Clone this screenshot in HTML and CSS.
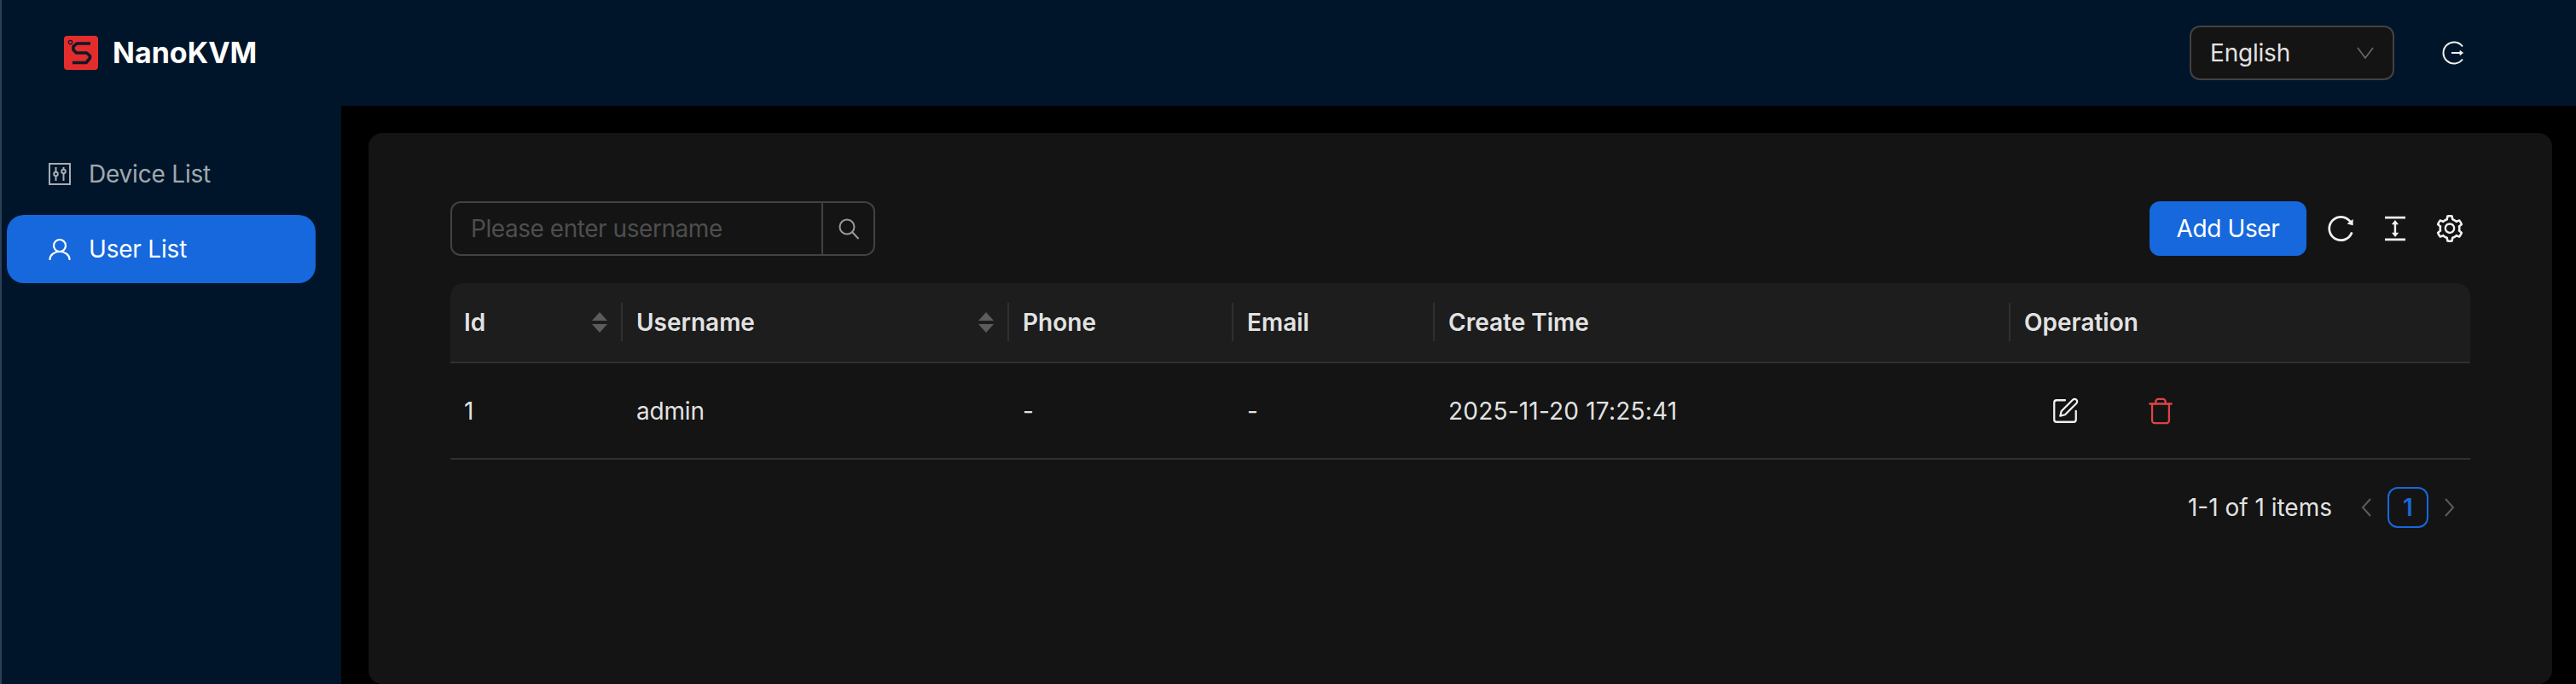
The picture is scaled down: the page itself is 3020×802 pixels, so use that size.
FILE: index.html
```html
<!DOCTYPE html>
<html lang="en">
<head>
<meta charset="utf-8">
<title>NanoKVM</title>
<link rel="stylesheet" href="styles.css">
</head>
<body>
<div class="app">
  <header class="topbar">
    <div class="brand">
      <svg class="logo" viewBox="0 0 40 40"><rect width="40" height="40" rx="4" fill="#e32d2d"/><circle cx="7.500" cy="7.500" r="2.200" fill="none" stroke="#101828" stroke-width="1.300"/><path d="M31 9H15l-4 3.500v4l3.500 3.500h12l4 3.500v2.500L26 31.500H10" fill="none" stroke="#101828" stroke-width="3.600" stroke-linejoin="round"/></svg>
      <span class="brand-name">NanoKVM</span>
    </div>
    <div class="top-actions">
      <div class="lang-select">
        <span class="tight">English</span>
        <svg class="chevron" viewBox="0 0 20 14"><path d="M1 1l9 12 9-12" fill="none" stroke="#6a6a6a" stroke-width="1.600"/></svg>
      </div>
      <svg class="logout" viewBox="0 0 28 28" fill="none" stroke="#f0f0f0" stroke-width="2"><path d="M26 6.500A12.500 12.500 0 1 0 26 21.500"/><path d="M13 14h13"/><path d="M23 11.500l3.500 2.500-3.500 2.500z" fill="#f0f0f0" stroke-width="1"/></svg>
    </div>
  </header>
  <div class="main">
    <nav class="sider">
      <div class="nav-item">
        <svg class="nav-icon" viewBox="0 0 26 26" fill="none" stroke="currentColor" stroke-width="2"><rect x="1" y="1" width="24" height="24"/><path d="M8.500 5v5M8.500 16v5M17.500 5v2M17.500 13v8"/><circle cx="8.500" cy="13" r="2.300"/><circle cx="17.500" cy="10" r="2.300"/></svg>
        <span class="tight">Device List</span>
      </div>
      <div class="nav-item nav-item-active">
        <svg class="nav-icon" viewBox="0 0 26 26" fill="none" stroke="currentColor" stroke-width="2.200" stroke-linecap="round"><circle cx="13" cy="9" r="7"/><path d="M1.500 25a11.500 9 0 0 1 23 0"/></svg>
        <span class="tight">User List</span>
      </div>
    </nav>
    <main class="content">
      <section class="card">
        <div class="toolbar">
          <div class="search">
            <span class="search-input">Please enter username</span>
            <span class="search-btn">
              <svg class="search-icon" viewBox="0 0 26 26" fill="none" stroke="#9a9a9a" stroke-width="2"><circle cx="11" cy="11" r="8.500"/><path d="M17 17l7.500 8"/></svg>
            </span>
          </div>
          <div class="tools">
            <button class="primary-btn">Add User</button>
            <svg class="tool-icon" viewBox="64 64 896 896" fill="#f0f0f0"><path d="M909.100 209.300l-56.400 44.100C775.800 155.100 656.200 92 521.900 92 290 92 102.300 279.500 102 511.500 101.700 743.700 289.800 932 521.900 932c181.300 0 335.800-115 394.600-276.100 1.500-4.200-.7-8.900-4.900-10.300l-56.700-19.500a8 8 0 0 0-10.100 4.800c-1.800 5-3.800 10-5.900 14.900-17.300 41-42.100 77.800-73.700 109.400A344.770 344.770 0 0 1 655.900 829c-42.300 17.900-87.400 27-133.800 27-46.500 0-91.500-9.100-133.800-27A341.500 341.500 0 0 1 279 755.200a342.160 342.160 0 0 1-73.700-109.400c-17.900-42.400-27-87.400-27-133.900s9.100-91.500 27-133.900c17.300-41 42.100-77.800 73.700-109.400 31.600-31.600 68.400-56.400 109.300-73.800 42.300-17.900 87.400-27 133.800-27 46.500 0 91.500 9.100 133.800 27a341.500 341.500 0 0 1 109.300 73.800c9.900 9.900 19.200 20.400 27.800 31.400l-60.200 47a8 8 0 0 0 3 14.100l175.600 43c5 1.200 9.900-2.600 9.900-7.700l.8-180.900c-.1-6.600-7.800-10.300-13-6.200z"/></svg>
            <svg class="tool-icon" viewBox="64 64 896 896" fill="#f0f0f0"><path d="M840 836H184c-4.400 0-8 3.600-8 8v60c0 4.400 3.600 8 8 8h656c4.400 0 8-3.600 8-8v-60c0-4.400-3.600-8-8-8zm0-724H184c-4.400 0-8 3.600-8 8v60c0 4.400 3.600 8 8 8h656c4.400 0 8-3.600 8-8v-60c0-4.400-3.600-8-8-8zM610.800 378c6 0 9.400-7 5.700-11.700L515.700 238.700a7.140 7.140 0 0 0-11.300 0L403.600 366.300a7.230 7.230 0 0 0 5.700 11.700H476v268h-62.800c-6 0-9.400 7-5.700 11.700l100.800 127.500c2.900 3.700 8.500 3.700 11.300 0l100.800-127.500c3.700-4.700.4-11.700-5.700-11.700H544V378h66.800z"/></svg>
            <svg class="tool-icon" viewBox="64 64 896 896" fill="#f0f0f0"><path d="M924.800 625.700l-65.500-56c3.100-19 4.700-38.400 4.700-57.800s-1.600-38.800-4.700-57.800l65.500-56a32.030 32.030 0 0 0 9.300-35.200l-.9-2.600a443.740 443.740 0 0 0-79.700-137.900l-1.800-2.100a32.120 32.120 0 0 0-35.100-9.500l-81.300 28.900c-30-24.600-63.500-44-99.700-57.600l-15.700-85a32.050 32.050 0 0 0-25.800-25.700l-2.700-.5c-52.100-9.400-106.900-9.400-159 0l-2.700.5a32.050 32.050 0 0 0-25.800 25.700l-15.800 85.400a351.860 351.860 0 0 0-99 57.400l-81.900-29.100a32 32 0 0 0-35.100 9.500l-1.800 2.100a446.020 446.020 0 0 0-79.700 137.900l-.9 2.600c-4.500 12.500-.8 26.500 9.300 35.200l66.300 56.600c-3.100 18.800-4.600 38-4.600 57.100 0 19.200 1.500 38.400 4.600 57.100L99 625.500a32.030 32.030 0 0 0-9.300 35.200l.9 2.600c18.100 50.400 44.900 96.900 79.700 137.900l1.800 2.100a32.120 32.120 0 0 0 35.100 9.500l81.900-29.100c29.800 24.500 63.100 43.900 99 57.400l15.800 85.400a32.050 32.050 0 0 0 25.800 25.700l2.700.5a449.400 449.400 0 0 0 159 0l2.700-.5a32.050 32.050 0 0 0 25.800-25.700l15.700-85a350 350 0 0 0 99.700-57.600l81.300 28.900a32 32 0 0 0 35.100-9.500l1.800-2.100c34.800-41.100 61.600-87.500 79.700-137.900l.9-2.600c4.500-12.300.8-26.300-9.300-35zM788.300 465.900c2.500 15.100 3.800 30.600 3.800 46.100s-1.300 31-3.800 46.100l-6.600 40.100 74.700 63.900a370.030 370.030 0 0 1-42.600 73.600L721 702.800l-31.400 25.800c-23.900 19.600-50.500 35-79.300 45.800l-38.100 14.300-17.900 97a377.500 377.500 0 0 1-85 0l-17.900-97.200-37.800-14.500c-28.500-10.800-55-26.200-78.700-45.700l-31.400-25.900-93.400 33.200c-17-22.900-31.200-47.600-42.600-73.600l75.500-64.500-6.500-40c-2.400-14.900-3.700-30.300-3.700-45.500 0-15.300 1.200-30.600 3.700-45.500l6.500-40-75.500-64.500c11.300-26.100 25.600-50.700 42.600-73.600l93.400 33.200 31.400-25.900c23.700-19.500 50.200-34.900 78.700-45.700l37.900-14.300 17.900-97.200c28.100-3.200 56.800-3.200 85 0l17.900 97 38.100 14.300c28.700 10.800 55.400 26.200 79.300 45.800l31.400 25.800 92.800-32.900c17 22.900 31.200 47.600 42.600 73.600L781.800 426l6.500 39.900zM512 326c-97.200 0-176 78.800-176 176s78.800 176 176 176 176-78.800 176-176-78.800-176-176-176zm79.200 255.200A111.600 111.600 0 0 1 512 614c-29.900 0-58-11.700-79.200-32.800A111.600 111.600 0 0 1 400 502c0-29.900 11.700-58 32.800-79.200C454 401.600 482.100 390 512 390c29.900 0 58 11.600 79.200 32.800A111.600 111.600 0 0 1 624 502c0 29.900-11.700 58-32.800 79.200z"/></svg>
          </div>
        </div>
        <table class="table">
          <colgroup>
            <col class="col-id"><col class="col-name"><col class="col-phone"><col class="col-email"><col class="col-time"><col class="col-op">
          </colgroup>
          <thead>
            <tr>
              <th class="th-first"><div class="th-inner"><span>Id</span><span class="sorter"><i class="caret-up"></i><i class="caret-down"></i></span></div></th>
              <th><div class="th-inner"><span>Username</span><span class="sorter"><i class="caret-up"></i><i class="caret-down"></i></span></div></th>
              <th>Phone</th>
              <th>Email</th>
              <th>Create Time</th>
              <th class="th-last">Operation</th>
            </tr>
          </thead>
          <tbody>
            <tr>
              <td>1</td>
              <td class="tight">admin</td>
              <td>-</td>
              <td>-</td>
              <td class="wide">2025-11-20 17:25:41</td>
              <td>
                <div class="ops">
                  <span class="op-btn"><svg class="op-icon" viewBox="0 0 24 24" fill="none" stroke="#f0f0f0" stroke-width="1.600" stroke-linecap="round" stroke-linejoin="round"><path d="M12 3H5a2 2 0 0 0-2 2v14a2 2 0 0 0 2 2h14a2 2 0 0 0 2-2v-7"/><path d="M18.375 2.625a2.121 2.121 0 1 1 3 3L12 15l-4 1 1-4Z"/></svg></span>
                  <span class="op-btn"><svg class="op-icon" viewBox="0 0 24 24" fill="none" stroke="#dc4446" stroke-width="1.600" stroke-linecap="round" stroke-linejoin="round"><path d="M3 6h18"/><path d="M19 6v14c0 1-1 2-2 2H7c-1 0-2-1-2-2V6"/><path d="M8 6V4c0-1 1-2 2-2h4c1 0 2 1 2 2v2"/></svg></span>
                </div>
              </td>
            </tr>
          </tbody>
        </table>
        <div class="pagination">
          <span class="total">1-1 of 1 items</span>
          <svg class="page-arrow" viewBox="0 0 14 24"><path d="M12 2L3 12l9 10" fill="none" stroke="#5c5c5c" stroke-width="2"/></svg>
          <span class="page-current">1</span>
          <svg class="page-arrow" viewBox="0 0 14 24"><path d="M2 2l9 10-9 10" fill="none" stroke="#5c5c5c" stroke-width="2"/></svg>
        </div>
      </section>
    </main>
  </div>
</div>
</body>
</html>
```

FILE: styles.css
```css
* { box-sizing: border-box; }
html, body { margin: 0; height: 100%; overflow: hidden; background: #000; }
body { font-family: Inter, "Liberation Sans", sans-serif; font-size: 28px; color: rgba(255,255,255,.9); }
.app { height: 100vh; display: flex; flex-direction: column; border-left: 2px solid #2c4056; background: #000; }
.tight { letter-spacing: -0.2px; }
.wide { letter-spacing: 0.2px; }

.topbar { height: 124px; flex: none; display: flex; align-items: center; justify-content: space-between; background: #001529; padding: 0 131px 0 73px; }
.brand { display: flex; align-items: center; gap: 17px; }
.logo { width: 40px; height: 40px; display: block; }
.brand-name { font-size: 34px; font-weight: 700; color: #fff; line-height: 40px; }
.top-actions { display: flex; align-items: center; gap: 54px; }
.lang-select { width: 240px; height: 64px; display: flex; align-items: center; justify-content: space-between; padding: 0 22px 0 22px; background: #141414; border: 2px solid #424242; border-radius: 12px; }
.chevron { width: 20px; height: 14px; display: block; }
.logout { width: 28px; height: 28px; display: block; }

.main { flex: 1; display: flex; min-height: 0; }
.sider { width: 398px; flex: none; background: #001529; padding: 40px 30px 0 6px; display: flex; flex-direction: column; gap: 8px; }
.nav-item { height: 80px; display: flex; align-items: center; gap: 21px; padding-left: 49px; border-radius: 20px; color: rgba(255,255,255,.65); }
.nav-item-active { background: #1668dc; color: #fff; }
.nav-icon { width: 26px; height: 26px; display: block; flex: none; }

.content { flex: 1; padding: 32px 28px 0 32px; min-width: 0; }
.card { height: 100%; background: #141414; border-radius: 16px; padding: 80px 96px 0; }

.toolbar { display: flex; align-items: center; justify-content: space-between; height: 64px; margin-bottom: 32px; }
.search { width: 498px; height: 64px; display: flex; border: 2px solid #424242; border-radius: 12px; }
.search-input { flex: 1; display: flex; align-items: center; padding-left: 22px; color: rgba(255,255,255,.25); border-right: 2px solid #424242; letter-spacing: -0.45px; }
.search-btn { width: 59px; display: flex; align-items: center; justify-content: center; }
.search-icon { width: 26px; height: 26px; display: block; }
.tools { display: flex; align-items: center; gap: 32px; padding-right: 8px; }
.tools .primary-btn { margin-right: -8px; }
.primary-btn { width: 184px; height: 64px; border: 0; border-radius: 12px; background: #1668dc; color: #fff; font: inherit; padding: 0; letter-spacing: -0.4px; }
.tool-icon { width: 32px; height: 32px; display: block; }

.table { width: 2368px; border-collapse: separate; border-spacing: 0; table-layout: fixed; }
.col-id { width: 202px; }
.col-name { width: 453px; }
.col-phone { width: 263px; }
.col-email { width: 236px; }
.col-time { width: 675px; }
.col-op { width: 539px; }
.table th { position: relative; height: 94px; padding: 0 16px; text-align: left; font-weight: 600; background: #1d1d1d; border-bottom: 2px solid #303030; }
.table th::after { content: ""; position: absolute; right: 0; top: 23px; width: 2px; height: 45px; background: #303030; }
.table th.th-first { border-top-left-radius: 16px; }
.table th.th-last { border-top-right-radius: 16px; }
.table th.th-last::after { display: none; }
.th-inner { display: flex; align-items: center; justify-content: space-between; padding-right: 2px; }
.sorter { display: flex; flex-direction: column; gap: 4px; }
.caret-up, .caret-down { display: block; width: 0; height: 0; border-left: 9px solid transparent; border-right: 9px solid transparent; }
.caret-up { border-bottom: 10px solid #5c5c5c; }
.caret-down { border-top: 10px solid #5c5c5c; }
.table td { height: 113px; padding: 0 16px; border-bottom: 2px solid #303030; }
.ops { display: flex; gap: 16px; }
.op-btn { width: 96px; height: 48px; display: flex; align-items: center; justify-content: center; }
.op-icon { width: 34px; height: 34px; display: block; }

.pagination { display: flex; align-items: center; justify-content: flex-end; margin-top: 32px; height: 48px; padding-right: 17px; }
.total { margin-right: 33px; }
.page-arrow { width: 14px; height: 24px; display: block; }
.page-current { width: 48px; height: 48px; margin: 0 18px; display: flex; align-items: center; justify-content: center; border: 2px solid #1668dc; border-radius: 12px; color: #1668dc; font-weight: 600; }
```
